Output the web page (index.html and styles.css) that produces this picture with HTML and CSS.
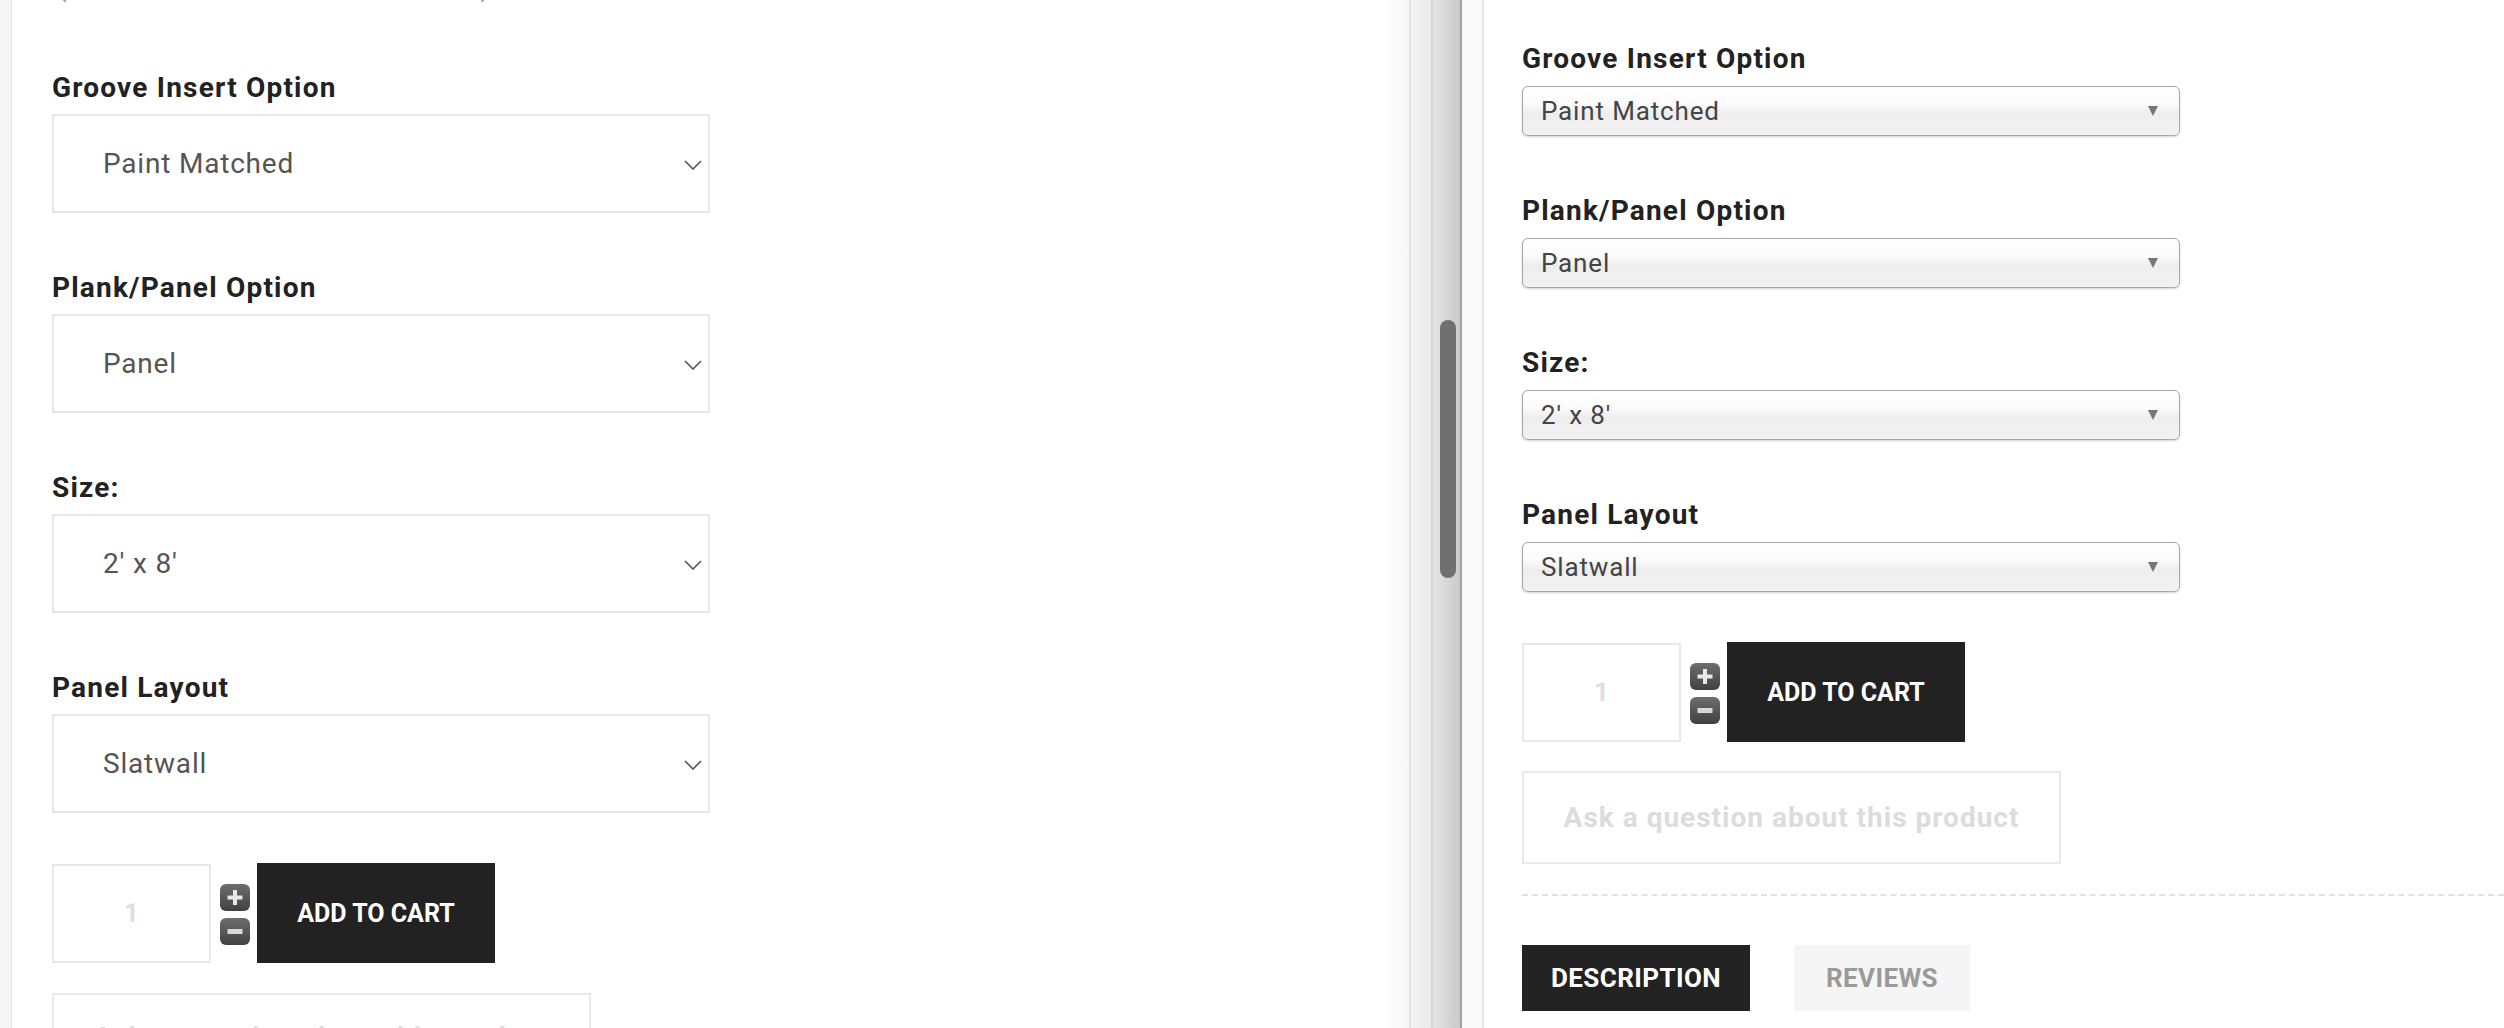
FILE: index.html
```html
<!DOCTYPE html>
<html lang="en">
<head>
<meta charset="utf-8">
<title>Product options</title>
<link rel="stylesheet" href="styles.css">
</head>
<body>
<div class="screen">
  <section class="pane pane-left">
    <div class="gutter-left"></div>
    <div class="content-left">
      <div class="paren-clip"><div class="paren-line"><span>(</span><span class="paren-close">)</span></div></div>

      <div class="field">
        <div class="label">Groove Insert Option</div>
        <div class="sel-l"><span>Paint Matched</span><svg class="chev" width="18" height="10" viewBox="0 0 18 10"><path d="M1 1 L9 9 L17 1" fill="none" stroke="#555" stroke-width="1.6"/></svg></div>
      </div>
      <div class="field">
        <div class="label">Plank/Panel Option</div>
        <div class="sel-l"><span>Panel</span><svg class="chev" width="18" height="10" viewBox="0 0 18 10"><path d="M1 1 L9 9 L17 1" fill="none" stroke="#555" stroke-width="1.6"/></svg></div>
      </div>
      <div class="field">
        <div class="label">Size:</div>
        <div class="sel-l"><span>2' x 8'</span><svg class="chev" width="18" height="10" viewBox="0 0 18 10"><path d="M1 1 L9 9 L17 1" fill="none" stroke="#555" stroke-width="1.6"/></svg></div>
      </div>
      <div class="field">
        <div class="label">Panel Layout</div>
        <div class="sel-l"><span>Slatwall</span><svg class="chev" width="18" height="10" viewBox="0 0 18 10"><path d="M1 1 L9 9 L17 1" fill="none" stroke="#555" stroke-width="1.6"/></svg></div>
      </div>

      <div class="cart-row">
        <div class="qty">1</div>
        <div class="steppers">
          <svg class="step" width="30" height="27" viewBox="0 0 30 27"><defs><linearGradient id="g1" x1="0" y1="0" x2="0" y2="1"><stop offset="0" stop-color="#6e6e6e"/><stop offset="1" stop-color="#404040"/></linearGradient></defs><rect x="0" y="0" width="30" height="27" rx="6" fill="url(#g1)"/><rect x="13" y="6" width="4" height="15" fill="#e8e8e8"/><rect x="7.5" y="11.5" width="15" height="4" fill="#e8e8e8"/></svg>
          <svg class="step" width="30" height="27" viewBox="0 0 30 27"><rect x="0" y="0" width="30" height="27" rx="6" fill="url(#g1)"/><rect x="7.5" y="11" width="15" height="5" fill="#d8d8d8"/></svg>
        </div>
        <div class="add">ADD TO CART</div>
      </div>
      <div class="ask ask-l">Ask a question about this product</div>
    </div>
  </section>

  <div class="divider">
    <div class="dv-a"></div>
    <div class="dv-b"><div class="thumb"></div></div>
  </div>

  <section class="pane pane-right">
    <div class="gutter-right"></div>
    <div class="content-right">
      <div class="field-r">
        <div class="label label-r">Groove Insert Option</div>
        <div class="sel-r"><span>Paint Matched</span><span class="tri"></span></div>
      </div>
      <div class="field-r">
        <div class="label label-r">Plank/Panel Option</div>
        <div class="sel-r"><span>Panel</span><span class="tri"></span></div>
      </div>
      <div class="field-r">
        <div class="label label-r">Size:</div>
        <div class="sel-r"><span>2' x 8'</span><span class="tri"></span></div>
      </div>
      <div class="field-r">
        <div class="label label-r">Panel Layout</div>
        <div class="sel-r"><span>Slatwall</span><span class="tri"></span></div>
      </div>

      <div class="cart-row cart-row-r">
        <div class="qty">1</div>
        <div class="steppers">
          <svg class="step" width="30" height="27" viewBox="0 0 30 27"><rect x="0" y="0" width="30" height="27" rx="6" fill="url(#g1)"/><rect x="13" y="6" width="4" height="15" fill="#e8e8e8"/><rect x="7.5" y="11.5" width="15" height="4" fill="#e8e8e8"/></svg>
          <svg class="step" width="30" height="27" viewBox="0 0 30 27"><rect x="0" y="0" width="30" height="27" rx="6" fill="url(#g1)"/><rect x="7.5" y="11" width="15" height="5" fill="#d8d8d8"/></svg>
        </div>
        <div class="add">ADD TO CART</div>
      </div>
      <div class="ask ask-r">Ask a question about this product</div>
      <div class="dash"></div>
      <div class="tabs">
        <div class="tab tab-active">DESCRIPTION</div>
        <div class="tab tab-idle">REVIEWS</div>
      </div>
    </div>
  </section>
</div>
</body>
</html>
```
FILE: styles.css
```css
* { box-sizing: border-box; }
html, body { margin: 0; padding: 0; }
body {
  width: 2504px;
  height: 1028px;
  overflow: hidden;
  background: #fff;
  font-family: Roboto, "Liberation Sans", Arial, sans-serif;
}
.screen {
  display: flex;
  width: 2504px;
  height: 1028px;
  overflow: hidden;
}
.pane { display: flex; height: 1028px; }

/* left pane */
.pane-left {
  width: 1409px;
  background: linear-gradient(to right, #fff 0, #fff 1380px, #f7f7f7 1409px);
}
.gutter-left {
  width: 12px;
  background: #f6f6f6;
  border-right: 1px solid #e4e4e4;
  flex: none;
}
.content-left {
  flex: 1;
  padding-left: 40px;
  display: flex;
  flex-direction: column;
}
.paren-clip {
  height: 4px;
  overflow: hidden;
  margin-bottom: 67px;
  flex: none;
}
.paren-line {
  margin-top: -30px;
  font: 400 28px/34px Roboto, sans-serif;
  color: #9a9a9a;
  display: flex;
  padding-left: 5px;
}
.paren-close { margin-left: 414px; }

.field + .field { margin-top: 58px; }
.label {
  font: 700 28px/34px Roboto, sans-serif;
  letter-spacing: 1.2px;
  color: #222;
  margin-bottom: 9px;
}
.sel-l {
  width: 658px;
  height: 99px;
  border: 2px solid #e8e8e8;
  display: flex;
  align-items: center;
  justify-content: space-between;
  padding: 0 6px 0 49px;
  font: 400 28px/34px Roboto, sans-serif;
  letter-spacing: 0.8px;
  color: #555;
}
.chev { display: block; margin-top: 2px; }

.cart-row {
  display: flex;
  align-items: center;
  margin-top: 50px;
  height: 100px;
  flex: none;
}
.qty {
  width: 159px;
  height: 99px;
  border: 2px solid #e8e8e8;
  display: flex;
  align-items: center;
  justify-content: center;
  font: 700 26px Roboto, sans-serif;
  color: #dedede;
}
.steppers {
  display: flex;
  flex-direction: column;
  gap: 7px;
  margin: 2px 7px 0 9px;
}
.step { display: block; }
.add {
  width: 238px;
  height: 100px;
  background: #222;
  color: #fff;
  display: flex;
  align-items: center;
  justify-content: center;
  font: 700 25px Roboto, sans-serif;
}
.ask {
  margin-top: 30px;
  width: 539px;
  height: 93px;
  border: 2px solid #eaeaea;
  display: flex;
  align-items: center;
  justify-content: center;
  font: 700 28px Roboto, sans-serif;
  letter-spacing: 1px;
  color: #dcdcdc;
  flex: none;
}
.ask-l {
  align-items: flex-start;
  padding-top: 26px;
}

/* divider */
.divider {
  width: 53px;
  flex: none;
  display: flex;
  height: 1028px;
}
.dv-a {
  width: 24px;
  border-left: 2px solid #e2e2e2;
  border-right: 2px solid #d6d6d6;
  background: linear-gradient(to right, #f2f2f2, #ebebeb);
}
.dv-b {
  flex: 1;
  background: linear-gradient(to right, #e4e4e4, #cacaca);
  border-right: 2px solid #a2a2a2;
  padding: 320px 0 0 7px;
}
.thumb {
  width: 16px;
  height: 258px;
  border-radius: 8px;
  background: #707070;
}

/* right pane */
.pane-right { flex: 1; }
.gutter-right {
  width: 22px;
  flex: none;
  background: #fafafa;
  border-right: 2px solid #e6e6e6;
}
.content-right {
  flex: 1;
  padding: 42px 0 0 38px;
  display: flex;
  flex-direction: column;
}
.field-r + .field-r { margin-top: 58px; }
.label-r { margin-bottom: 10px; }
.sel-r {
  width: 658px;
  height: 50px;
  border: 1px solid #a6a6a6;
  border-radius: 6px;
  background: linear-gradient(to bottom, #ffffff 0%, #fbfbfb 35%, #ededed 55%, #f3f3f3 100%);
  box-shadow: 0 1px 2px rgba(0,0,0,0.18);
  display: flex;
  align-items: center;
  justify-content: space-between;
  padding: 0 21px 0 18px;
  font: 400 26px/30px Roboto, sans-serif;
  letter-spacing: 0.85px;
  color: #444;
}
.tri {
  width: 0;
  height: 0;
  border-left: 5.5px solid transparent;
  border-right: 5.5px solid transparent;
  border-top: 10px solid #777;
}
.cart-row-r { margin-top: 50px; }
.ask-r { margin-top: 29px; }
.dash {
  margin-top: 30px;
  border-top: 2px dashed #e2e2e2;
  width: 100%;
}
.tabs {
  display: flex;
  gap: 44px;
  margin-top: 49px;
}
.tab {
  height: 66px;
  display: flex;
  align-items: center;
  justify-content: center;
  font: 700 26px Roboto, sans-serif;
  letter-spacing: 0.4px;
}
.tab-active { width: 228px; background: #222; color: #fff; }
.tab-idle { width: 176px; background: #f5f5f5; color: #9a9a9a; }
```
